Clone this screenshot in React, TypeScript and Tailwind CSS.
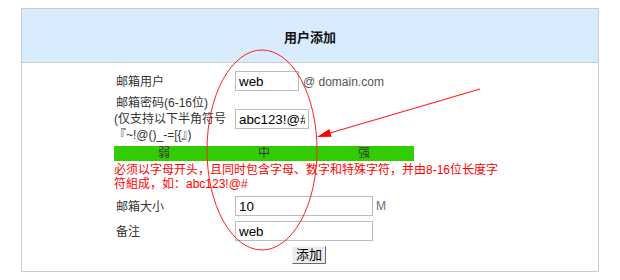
import React from "react";

const cjk = "font-['Liberation_Sans','Noto_Sans_CJK_SC',sans-serif]";

function Field({ value, w }: { value: string; w: string }) {
  return (
    <input
      readOnly
      value={value}
      className={`h-[20px] ${w} border border-[#bdbdbd] bg-white px-[3px] text-[13.33px] text-black outline-none font-['Liberation_Sans',sans-serif]`}
    />
  );
}

export default function App() {
  return (
    <div className={`relative w-[620px] h-[280px] bg-white pt-[8px] pl-[21px] ${cjk}`}>
      <div className="w-[578px] border border-[#cccccc]">
        <div className="h-[54px] bg-[#d9ecfd] border-b border-[#cccccc] flex items-center justify-center pt-[4px]">
          <span className="text-[13px] font-bold text-[#111]">用户添加</span>
        </div>
        <div className="pl-[92px] pt-[8px] pb-[7px] text-[12px] text-[#333]">
          <div className="w-[390px]">
            <div className="flex items-center h-[20px]">
              <div className="w-[121px] pl-[2px] pt-[2px]">邮箱用户</div>
              <Field value="web" w="w-[64px]" />
              <span className="ml-[4px] text-[#555] pt-[1px]">@ domain.com</span>
            </div>
            <div className="flex items-center mt-[4px]">
              <div className="w-[121px] pl-[2px] leading-[16px]">
                <div>邮箱密码(6-16位)</div>
                <div className="-ml-[2px]">(仅支持以下半角符号</div>
                <div className="-ml-[2px]">{"『~!@()_-=[{』)"}</div>
              </div>
              <Field value="abc123!@#" w="w-[74px]" />
            </div>
            <div className="mt-[3px] w-[300px] h-[15px] bg-[#33cc00] grid grid-cols-3 text-[#3a3a3a] leading-[15px] text-center">
              <span>弱</span>
              <span>中</span>
              <span>强</span>
            </div>
            <div className="mt-[2px] leading-[14px] text-[#ff0000]">
              必须以字母开头，且同时包含字母、数字和特殊字符，并由8-16位长度字符組成，如：abc123!@#
            </div>
            <div className="flex items-center mt-[5px]">
              <div className="w-[121px] pl-[2px] pt-[1px]">邮箱大小</div>
              <Field value="10" w="w-[138px]" />
              <span className="ml-[3px] text-[#5f7189]">M</span>
            </div>
            <div className="flex items-center mt-[5px]">
              <div className="w-[121px] pl-[2px] pt-[1px]">备注</div>
              <Field value="web" w="w-[138px]" />
            </div>
            <div className="flex justify-center mt-[5px]">
              <button className="h-[18px] w-[34px] bg-[#ececec] border border-t-[#f4f4f4] border-l-[#f4f4f4] border-r-[#6a6a6a] border-b-[#6a6a6a] text-[13px] leading-[14px] text-black p-0">
                添加
              </button>
            </div>
          </div>
        </div>
      </div>
      <svg
        className="absolute left-0 top-0 pointer-events-none"
        width="620"
        height="280"
        viewBox="0 0 620 280"
      >
        <ellipse cx="262" cy="150" rx="55" ry="100" fill="none" stroke="#ff2020" strokeWidth="1" />
        <line x1="480" y1="89" x2="330" y2="133" stroke="#ff2020" strokeWidth="1.2" />
        <polygon points="317,137 329.3,129 331.5,136.8" fill="#ff0000" />
      </svg>
    </div>
  );
}
